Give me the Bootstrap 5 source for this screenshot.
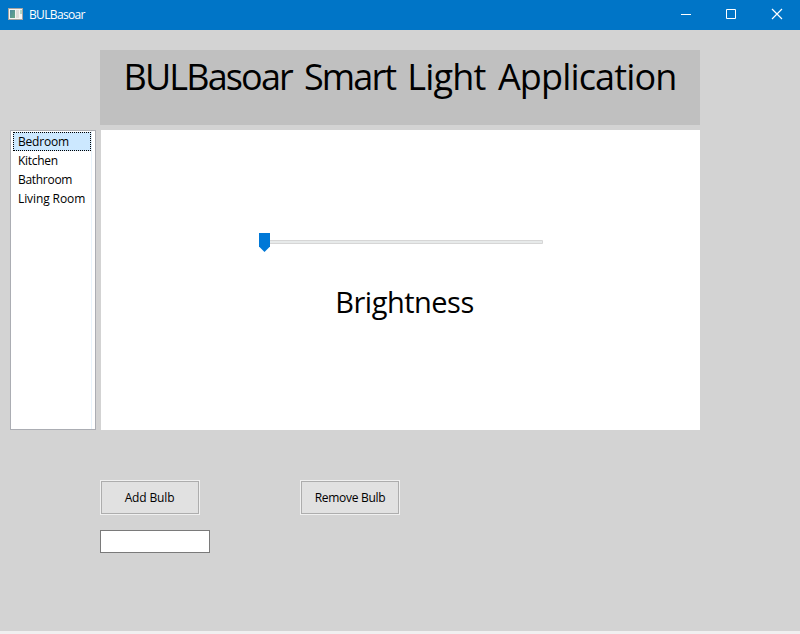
<!DOCTYPE html>
<html lang="en">
<head>
<meta charset="utf-8">
<meta name="viewport" content="width=device-width, initial-scale=1">
<title>BULBasoar</title>
<link href="https://cdn.jsdelivr.net/npm/bootstrap@5.3.0/dist/css/bootstrap.min.css" rel="stylesheet">
<style>
  body { width: 800px; height: 634px; background: #d3d3d3; color: #000; font: 12px/16px "Open Sans", "Noto Sans", sans-serif; border-bottom: 3px solid #f0f0f0; }
  .titlebar { height: 30px; background: #0075c7; padding-left: 8px; color: #fff; }
  .app-icon { margin-bottom: 2px; }
  .caption-text { margin-left: 6px; font-size: 12px; letter-spacing: -.65px; }
  .win-btn { width: 46px; height: 30px; }
  .win-btn:first-child { width: 45px; }
  .win-btn:nth-child(2) { width: 45px; }
  .banner { width: 600px; height: 75px; margin: 20px 0 5px 100px; background: #c0c0c0; }
  .banner h1 { font-size: 36px; line-height: 49px; font-weight: 400; padding-top: 2px; white-space: nowrap; word-spacing: 4px; letter-spacing: -.85px; }
  .banner .tight { letter-spacing: -1.85px; word-spacing: 4.5px; }
  .workspace { height: 300px; padding-left: 10px; gap: 5px; }
  .rooms { width: 86px; border: 1px solid #abadb3; padding: 1px 4px 1px 1px; box-shadow: inset -3px 0 #fff, inset -4px 0 #e8f3fb; }
  .rooms .list-group-item { height: 19px; line-height: 18px; padding: 0 0 0 5px; border: 1px solid transparent; border-right: 0; color: #000; font-size: 12px; white-space: nowrap; background: none; letter-spacing: -.3px; }
  .rooms .list-group-item.active { background: #cce8ff; border: 1px dotted #000; margin-left: 1px; padding-left: 4px; letter-spacing: -.2px; }
  .rooms .list-group-item:last-child { letter-spacing: -.1px; }
  .stage { width: 599px; padding-top: 103px; }
  .slider { width: 284px; height: 19px; margin-left: 158px; }
  .level { font-size: 29px; line-height: 40px; margin-top: 30px; padding-left: 8px; letter-spacing: -.5px; }
  .actions { margin: 50px 0 0 100px; gap: 100px; }
  .win-action { width: 100px; height: 35px; padding: 0; font-size: 12px; line-height: 16px; letter-spacing: -.3px; color: #000; background: #e1e1e1; border: 1px solid #f0f0f0; border-radius: 0; box-shadow: inset 0 0 0 1px #adadad; }
  .win-action:first-child { letter-spacing: -.15px; padding-right: 1px; }
  .bulb-name { width: 110px; height: 23px; margin: 15px 0 0 100px; padding: 0 4px; border: 1px solid #7a7a7a; font-size: 12px; min-height: 0; }
</style>
</head>
<body class="overflow-hidden">
<header class="titlebar d-flex align-items-center">
  <svg class="app-icon" width="15" height="12" viewBox="0 0 15 12" shape-rendering="crispEdges" aria-hidden="true">
    <defs><linearGradient id="pane" x2="1" y2="1"><stop stop-color="#4a8ba0"/><stop offset="1" stop-color="#68a785"/></linearGradient></defs>
    <path fill="#a6a4a0" d="M0 0h15v12H0z"/><path fill="#f4f4f2" d="M1 1h13v10H1z"/>
    <path fill="url(#pane)" d="M2 2h5v8H2z"/><path fill="#deddda" d="M8 2h3v8H8z"/><path fill="#b5d6c6" d="M12 2h2v4h-2z"/>
  </svg>
  <span class="caption-text">BULBasoar</span>
  <div class="d-flex ms-auto">
    <span class="win-btn d-flex"><svg width="45" height="30"><path fill="#fff" d="M17 14h10v1H17z"/></svg></span>
    <span class="win-btn d-flex"><svg width="45" height="30"><path fill="none" stroke="#fff" d="M17.5 9.500h9v9h-9z"/></svg></span>
    <span class="win-btn d-flex"><svg width="46" height="30"><path fill="none" stroke="#fff" stroke-width="1.2" d="M18 9l10 10M28 9l-10 10"/></svg></span>
  </div>
</header>
<main>
  <div class="banner text-center"><h1 class="m-0"><span class="tight">BULBasoar Smart </span>Light Application</h1></div>
  <div class="workspace d-flex">
    <ul class="rooms list-group list-group-flush bg-white rounded-0 mb-0">
      <li class="list-group-item active">Bedroom</li>
      <li class="list-group-item">Kitchen</li>
      <li class="list-group-item">Bathroom</li>
      <li class="list-group-item">Living Room</li>
    </ul>
    <section class="stage bg-white">
      <svg class="slider d-block" viewBox="0 0 284 19" role="img" aria-label="Brightness slider">
        <path fill="#e7eaea" stroke="#d6d6d6" d="M.5 7.500h283v3H.5z"/>
        <path fill="#0078d7" d="M0 0h11v13.500L5.500 19 0 13.500z"/>
      </svg>
      <div class="level text-center">Brightness</div>
    </section>
  </div>
  <div class="actions d-flex">
    <button class="btn win-action" type="button">Add Bulb</button>
    <button class="btn win-action" type="button">Remove Bulb</button>
  </div>
  <input class="bulb-name form-control rounded-0" type="text" aria-label="Bulb name">
</main>
<script src="https://cdn.jsdelivr.net/npm/bootstrap@5.3.0/dist/js/bootstrap.bundle.min.js"></script>
</body>
</html>
